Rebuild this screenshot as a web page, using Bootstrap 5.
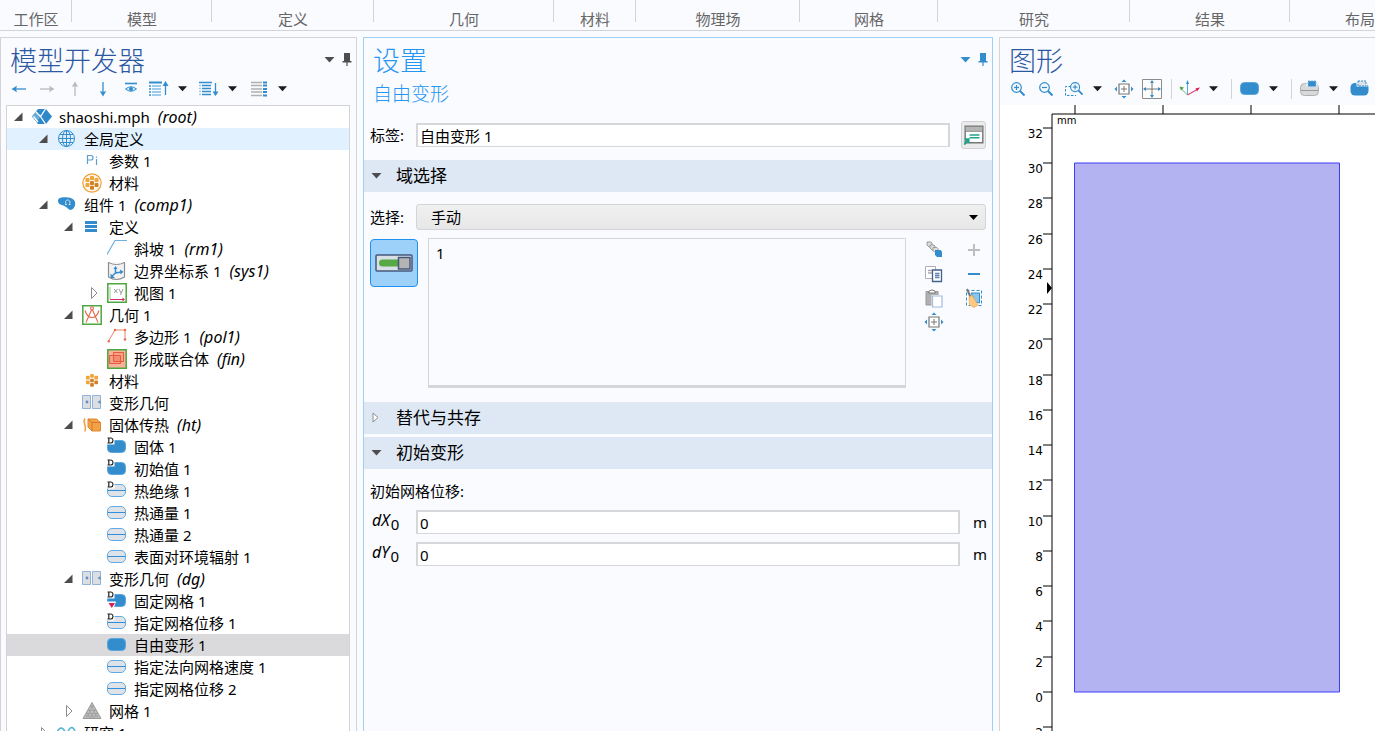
<!DOCTYPE html>
<html lang="zh-CN">
<head>
<meta charset="utf-8">
<meta name="viewport" content="width=device-width, initial-scale=1">
<title>shaoshi.mph</title>
<link href="https://cdn.jsdelivr.net/npm/bootstrap@5.3.0/dist/css/bootstrap.min.css" rel="stylesheet">
<style>
:root { --line:#d3d4d8; --pane:#fafbff; --blue:#338dcd; --bar:#dee8f4; }
body { font-family:"Noto Sans","Noto Sans CJK SC",sans-serif; font-size:15px; line-height:22px; color:#000; background:var(--pane); }
button { font:inherit; color:inherit; }
svg { display:block; flex:none; }

/* ribbon */
.ribbon { display:grid; grid-template-columns:72fr 140fr 162fr 180fr 82fr 164fr 138fr 192fr 160fr 85fr; height:32px; border-bottom:1px solid var(--line); color:#666; }
.ribbon-group { position:relative; padding-top:8px; text-align:center; white-space:nowrap; overflow:hidden; }
.ribbon-group:not(:last-child)::after { content:""; position:absolute; right:0; top:0; height:22px; border-right:1px solid var(--line); }

/* window panes */
.workspace { display:grid; grid-template-columns:minmax(0,357fr) minmax(0,630fr) minmax(0,376fr); gap:6px; padding-top:6px; }
.pane { border:1px solid var(--line); border-bottom:0; background:var(--pane); }
.pane-active { border-color:#9fcff5; }
.pane-head { height:40px; padding:4px 0 0 9px; }
.pane-head h1 { font-family:"Noto Sans CJK SC Light","Noto Sans CJK SC",sans-serif; font-size:27px; font-weight:300; line-height:36px; color:#2c58a2; }
.pane-active h1, .pane-sub { color:#2796f2; }
.pane-sub { font-family:"Noto Sans CJK SC Light","Noto Sans CJK SC",sans-serif; font-size:19px; font-weight:300; line-height:30px; padding-left:9px; margin-bottom:13px; }
.win-btn { border:0; background:none; padding:0; width:18px; height:20px; display:flex; align-items:center; justify-content:center; color:#4d4d4d; }
.pane-active .win-btn { color:var(--blue); }
.tools { height:21px; margin-bottom:6px; padding-left:4px; color:#1a1a1a; }
.tool, .tool-more { border:0; background:none; padding:0; height:20px; display:flex; align-items:center; justify-content:center; flex:none; }
.tool { width:28px; }
.tool-more { width:18px; }
.tool-on { color:var(--blue); }
.tool-off { color:#b9b9bb; }
.rule { width:1px; height:20px; background:var(--line); flex:none; margin:0 4px 0 5px; }
.rule-wide { margin-left:9px; }

/* model tree */
.tree { margin:0 6px 0 5px; border:1px solid var(--line); border-bottom:0; background:#fff; list-style:none; padding:0; }
.tree-row { display:flex; align-items:center; height:22px; padding-left:5px; color:#000; text-decoration:none; white-space:nowrap; }
.tree-row em { margin-left:8px; font-size:16px; }
.fold { width:20px; flex:none; }
.glyph { width:20px; height:20px; margin-right:7px; }
.lv1 { padding-left:30px; } .lv2 { padding-left:55px; } .lv3 { padding-left:80px; }
.row-hot { background:#e1f1ff; }
.row-sel { background:#dadadc; }

/* settings form */
.form-line { display:flex; align-items:center; padding:0 6px; }
.field-name { width:46px; flex:none; }
.field { flex:1; min-width:0; height:24px; padding:0 2px; border:2px solid #d6d7da; border-bottom-width:1px; background:#fff; outline:0; color:#000; line-height:20px; }
.pick { flex:1; min-width:0; height:26px; padding:0 14px; appearance:none; border:1px solid #d3d4d6; border-radius:3px; color:#000; line-height:22px;
  background:url("data:image/svg+xml,%3Csvg xmlns='http://www.w3.org/2000/svg' width='9' height='5'%3E%3Cpath d='M0 0h9L4.500 5z'/%3E%3C/svg%3E") no-repeat right 7px center, linear-gradient(#f0f0f1,#e7e7e8); }
.panel-btn { width:25px; height:28px; margin-left:11px; border:1px solid #d0d1d4; border-radius:3px; background:#ebebec; padding:0; display:flex; align-items:center; justify-content:center; }
.section-bar { width:100%; height:32px; border:0; background:var(--bar); padding:0 7px; display:flex; align-items:center; font-size:17px; text-align:left; }
.section-bar svg { margin-right:14px; color:#4d4d4d; }
.bar-first { margin:11px 0 12px; }
.bar-last { margin:3px 0 11px; }
.pick-area { margin:8px 0 14px; }
.active-btn { width:48px; height:48px; margin-top:1px; border:1px solid #1f90ee; border-radius:4px; background:#9ed1f9; padding:0; display:flex; align-items:center; justify-content:center; }
.entities { flex:1; min-width:0; height:150px; margin-left:10px; padding:3px 7px; border:1px solid #d5d6d8; border-bottom-width:3px; background:var(--pane); resize:none; outline:0; color:#000; display:block; }
.entity-tools { display:grid; grid-template-columns:24px 24px; grid-auto-rows:24px; column-gap:16px; margin-left:16px; }
.entity-tools button { border:0; background:none; padding:0; display:flex; align-items:center; justify-content:center; }
.var { font-style:italic; font-size:16px; padding-left:2px; line-height:20px; height:24px; }
.var sub { font-size:15px; font-style:normal; bottom:-4px; margin-left:1px; line-height:1; }
.unit { width:26px; padding-left:13px; flex:none; }

/* plot */
.plot { flex:1; min-height:0; overflow:hidden; background:#fff; }
.plot text { font-family:"DejaVu Sans",sans-serif; font-size:12px; }
.plot .plot-unit { font-size:10px; }
</style>
</head>
<body class="vh-100 overflow-hidden d-flex flex-column">

<svg width="0" height="0" class="position-absolute" aria-hidden="true">
  <defs>
    <symbol id="open" viewBox="0 0 20 20"><path d="M10.500 5.500v8.500H2z" fill="#4d4d4d"/></symbol>
    <symbol id="shut" viewBox="0 0 20 20"><path d="M4.500 4.500v11l5.500-5.500z" fill="#fff" stroke="#8c8c8c"/></symbol>
    <symbol id="i-root" viewBox="0 0 20 20"><path d="M0 9.500 6 2h8l6 7.500L14 17H6z" fill="#2f89c8"/><path d="M0 9.500 4.500 4 8.500 9.500 4.500 15z" fill="#8fc1e4" opacity=".6"/><path d="M4 5l4.500 4.500L13.500 2M8.500 9.500l5 7.500M1.500 9.500 6 15" fill="none" stroke="#fff" stroke-width="1.300"/></symbol>
    <symbol id="i-globe" viewBox="0 0 20 20"><g fill="none" stroke="#338dcd"><circle cx="9.500" cy="9.500" r="8"/><ellipse cx="9.500" cy="9.500" rx="4" ry="8"/><path d="M9.500 1.500v16M1.500 9.500h16M3 5.500h13M3 13.500h13"/></g></symbol>
    <symbol id="i-pi" viewBox="0 0 20 20"><g fill="none" stroke="#5a9fd4" stroke-width="1.200"><path d="M5.500 13V4.500h3.500q2 0 2 2.200T9 9H5.500M14.500 8v6M14.500 5.500v1.200"/></g></symbol>
    <symbol id="dots" viewBox="0 0 14 14"><g fill="#f0a43a"><rect x="5" width="4" height="4" rx="1"/><rect x=".5" y="2" width="4" height="4" rx="1"/><rect x="9.500" y="2" width="4" height="4" rx="1"/><rect x=".5" y="7" width="4" height="4" rx="1"/></g><g fill="#cf8129"><rect x="5" y="5" width="4" height="4" rx="1"/><rect x="9.500" y="7" width="4" height="4" rx="1"/><rect x="5" y="9.700" width="4" height="4" rx="1"/></g></symbol>
    <symbol id="i-matc" viewBox="0 0 20 20"><circle cx="10" cy="10" r="9.200" fill="#fff6e8" stroke="#f0a13a" stroke-width="1.200"/><use href="#dots" x="3" y="3" width="14" height="14"/></symbol>
    <symbol id="i-mat" viewBox="0 0 20 20"><use href="#dots" x="3.500" y="3" width="13" height="13"/></symbol>
    <symbol id="i-comp" viewBox="0 0 20 20"><path d="M1 6C1 2 6 2 11 2.500c6 .5 8 4 7 8-1 4-4.500 5.500-6.500 3.500C9.500 12 8 11 5 10 2.500 9.200 1 8.500 1 6z" fill="#338dcd"/><path d="M8 9.500h1.500c-2-2.500-.5-4.500 1.300-4.500s3.200 2 1.200 4.500h1.500" fill="none" stroke="#cfe5f5"/></symbol>
    <symbol id="i-def" viewBox="0 0 20 20"><path d="M3 5.500h12M3 9.500h12M3 13.500h12" stroke="#338dcd" stroke-width="3"/></symbol>
    <symbol id="i-ramp" viewBox="0 0 20 20"><path d="M0 15.500 8 1.500h12" fill="none" stroke="#6fb0de" stroke-width="1.200"/></symbol>
    <symbol id="i-sys" viewBox="0 0 20 20"><path d="M1.500 1v15q8 5 16 0V1" fill="#f2f2f2" stroke="#8c8c8c" stroke-width="1.200"/><path d="M1.500 1.500q8 4 16 0" fill="#fff" stroke="#8c8c8c"/><path d="M8.500 12V7M8.500 12l6-1M8.500 12 5 15" stroke="#338dcd" stroke-width="1.500"/><path d="M6.500 8l2-3 2 3zM13 8.500l3.500 2.300-3 2.700zM3.500 12.500V17H8z" fill="#338dcd"/></symbol>
    <symbol id="i-view" viewBox="0 0 20 20"><path d="M.8.800h18.400v18.400H.8z" fill="#fff" stroke="#4ea73f" stroke-width="1.500"/><path d="M3 16V4" stroke="#8fcf85"/><path d="M3 16.500h14" stroke="#d42a6b"/><path d="M15.500 14.500l2.500 2-2.500 2z" fill="#d42a6b"/><path d="M7 6l3.500 4M10.500 6 7 10M12 6l2 4M16 6l-2.500 6" stroke="#999" fill="none"/></symbol>
    <symbol id="i-geom" viewBox="0 0 20 20"><path d="M.8.800h18.400v18.400H.8z" fill="#fff" stroke="#4ea73f" stroke-width="1.500"/><path d="M9.700 4.500 4 17.500M10.300 4.500 16 17.500M3 5.500Q5 12.500 10 12.500T17 5.500" fill="none" stroke="#e66a4e" stroke-width="1.100"/><path d="M8.700 2h2.600v2.600H8.700z" fill="#fff" stroke="#e66a4e"/></symbol>
    <symbol id="i-poly" viewBox="0 0 20 20"><path d="M1.500 14 8 3h10v9" fill="none" stroke="#ec8066"/><g fill="#e66a4e"><circle cx="1.800" cy="14.300" r="1.200"/><circle cx="8" cy="3" r="1.200"/><circle cx="18" cy="3" r="1.200"/><circle cx="18" cy="12.500" r="1.200"/></g></symbol>
    <symbol id="i-union" viewBox="0 0 20 20"><path d="M.8.800h18.400v18.400H.8z" fill="#f8b29c" stroke="#4ea73f" stroke-width="1.500"/><path d="M6.500 3.500h10v9h-10zM2.500 6.500h11v8h-11z" fill="#f5a28a" stroke="#e8593a"/><path d="M7 7h6v5H7z" fill="#f08c70"/></symbol>
    <symbol id="i-dg" viewBox="0 0 20 20"><path d="M.5 2.500h8v13h-8zM10.500 2.500h8v13h-8z" fill="#dcdee2" stroke="#8fb4dc"/><circle cx="5" cy="9" r="1.400" fill="#5e8fc6"/><path d="M18.500 7v4l-3-2z" fill="#5e8fc6"/></symbol>
    <symbol id="i-ht" viewBox="0 0 20 20"><path d="M3 3.500c-3 4 2 5 0 13" fill="none" stroke="#f0a13a" stroke-width="1.600"/><path d="M6 4h8.500l4 3.500V16H10l-4-4z" fill="#f0a445" stroke="#e58636"/><path d="M6 4l4 3.500h8.500M10 7.500V16" fill="none" stroke="#e0712f"/></symbol>
    <symbol id="i-dom" viewBox="0 0 20 20"><rect x=".5" y="3.500" width="18" height="12" rx="4" fill="#338dcd" stroke="#5ba5da"/></symbol>
    <symbol id="i-bnd" viewBox="0 0 20 20"><rect x=".5" y="3.500" width="18" height="12" rx="4.500" fill="#dfe3e7" stroke="#64aae2"/><path d="M1 9.500h17" stroke="#2f8fda"/></symbol>
    <symbol id="dee" viewBox="0 0 8 8"><path d="M0 0h7.500v7.500H0z" fill="#fff"/><path d="M1.800 1v5M.5 1H4q2 .3 2 2.500T4 6H.5" fill="none" stroke="#222" stroke-width="1.200"/></symbol>
    <symbol id="i-domd" viewBox="0 0 20 20"><use href="#i-dom" width="20" height="20"/><use href="#dee" width="8" height="8"/></symbol>
    <symbol id="i-bndd" viewBox="0 0 20 20"><use href="#i-bnd" width="20" height="20"/><use href="#dee" width="8" height="8"/></symbol>
    <symbol id="i-fix" viewBox="0 0 20 20"><use href="#i-domd" width="20" height="20"/><path d="M0 10.500h9l-2 6H0z" fill="#fff"/><path d="M1.500 12h6.500l-3.200 5z" fill="#d81e5b"/></symbol>
    <symbol id="i-mesh" viewBox="0 0 20 20"><path d="M10 1.500 19 17.500H1z" fill="#c4c4c4" stroke="#999"/><path d="M7.500 6h5M6 9.500h8M4 12.500h12M2.500 15h15M9 4l6.500 13M7 8l4.500 9.500M5 11.500 8 17.500M11 4 4.500 17M13 8l-4.500 9.500M15 11.500l-3 6" fill="none" stroke="#999" stroke-width=".7"/></symbol>
    <symbol id="i-study" viewBox="0 0 20 20"><path d="M0 9q4-7 7-2l4 5M11 8q4-7 7 0" fill="none" stroke="#4fb7d0" stroke-width="1.500"/></symbol>

    <symbol id="caret" viewBox="0 0 10 6"><path d="M0 0h10L5 5.500z" fill="currentColor"/></symbol>
    <symbol id="pin" viewBox="0 0 10 14"><path d="M2 0h6v8h1.500v1.500h-9V8H2zM4.400 9h1.200v4H4.400z" fill="currentColor"/></symbol>
    <symbol id="arrow" viewBox="0 0 16 16"><path d="M4 8h11" stroke="currentColor" stroke-width="1.300"/><path d="M.5 8 6 4.700 5 8l1 3.300z" fill="currentColor"/></symbol>
    <symbol id="t-eye" viewBox="0 0 16 16"><path d="M2 2.500h12" stroke="#338dcd" stroke-width="1.600"/><path d="M2.500 8Q8 3.500 13.500 8 8 12.500 2.500 8z" fill="#d6eaf8" stroke="#338dcd"/><circle cx="8" cy="8" r="2" fill="#338dcd"/></symbol>
    <symbol id="t-up" viewBox="0 0 20 16"><path d="M0 1.500h13" stroke="#338dcd" stroke-width="2"/><path d="M0 5h2M0 8h2M0 11h2M0 14h2" stroke="#338dcd" stroke-width="1.500"/><path d="M3 5h9M3 8h9M3 11h9M3 14h9" stroke="#9fcbe9" stroke-width="1.800"/><path d="M16.500 2v12" stroke="#338dcd" stroke-width="1.300"/><path d="M13.500 5l3-5 3 5z" fill="#338dcd"/></symbol>
    <symbol id="t-dn" viewBox="0 0 20 16"><path d="M0 1.500h13M3 4.500h9M3 7.500h9M3 10.500h9M3 13.500h9" stroke="#338dcd" stroke-width="1.600"/><path d="M0 4.500h2M0 7.500h2M0 10.500h2M0 13.500h2" stroke="#9fcbe9" stroke-width="1.500"/><path d="M16.500 2v12" stroke="#338dcd" stroke-width="1.300"/><path d="M13.500 10.500l3 4.500 3-4.500z" fill="#338dcd"/></symbol>
    <symbol id="t-cols" viewBox="0 0 16 16"><path d="M0 1.500h11M0 4.500h11M0 8h11M0 11h11M0 14.500h11" stroke="#b0b0b0" stroke-width="1.300"/><path d="M12 1.500h4M12 4.500h4M12 8h4M12 11h4M12 14.500h4" stroke="#338dcd" stroke-width="1.800"/></symbol>
    <symbol id="lens" viewBox="0 0 16 16"><circle cx="6.500" cy="6.500" r="4.800" fill="#f3f8fc" stroke="#338dcd" stroke-width="1.200"/><path d="M10 10l4.500 4.500" stroke="#338dcd" stroke-width="2"/><path d="M4 6.500h5" stroke="#338dcd" stroke-width="1.200"/></symbol>
    <symbol id="t-in" viewBox="0 0 16 16"><use href="#lens" width="16" height="16"/><path d="M6.500 4v5" stroke="#338dcd" stroke-width="1.200"/></symbol>
    <symbol id="t-box" viewBox="0 0 20 16"><path d="M7 5.500H1.500v9H12" fill="none" stroke="#338dcd" stroke-dasharray="2.500 1.500"/><use href="#t-in" x="5" y="0" width="15" height="15"/></symbol>
    <symbol id="t-ext" viewBox="0 0 20 20"><path d="M5 5h10v10H5z" fill="#fff" stroke="#777" stroke-width="1.200"/><path d="M7 10h6M10 7v6" stroke="#777"/><path d="M7.500 3 10 .5 12.500 3zM7.500 17l2.500 2.500 2.500-2.500zM3 7.500.5 10 3 12.500zM17 7.500l2.500 2.500-2.500 2.500z" fill="#338dcd"/></symbol>
    <symbol id="t-fit" viewBox="0 0 20 20"><path d="M.5.500h19v19H.5z" fill="#fdfdfe" stroke="#8c8c8c"/><path d="M10 2v16M2 10h16" stroke="#777"/><path d="M8 4l2-3 2 3zM8 16l2 3 2-3zM4 8l-3 2 3 2zM16 8l3 2-3 2z" fill="#338dcd"/></symbol>
    <symbol id="t-axes" viewBox="0 0 22 18"><path d="M8.500 15V3" stroke="#5ba5da"/><path d="M8.500 15 2 8.500" stroke="#63bf5a"/><path d="M8.500 15 19 9" stroke="#df4a80" stroke-width="1.200"/><path d="M7 4l1.500-4L10 4z" fill="#338dcd"/><path d="M.5 6.500l4.500 1-3 3z" fill="#4ea73f"/><path d="M21 7.500l-3 4-1.500-3.200z" fill="#d42a5b"/></symbol>
    <symbol id="t-prt" viewBox="0 0 20 20"><rect x=".5" y="4.500" width="18" height="12" rx="4" fill="#d8d9db" stroke="#b0b0b0"/><path d="M1 11.500h17" stroke="#999"/><path d="M6.500 1h11v7h-11z" fill="#fafbff"/><path d="M8 2h8v5.500H8z" fill="#338dcd" stroke="#7ab4e0" stroke-dasharray="2 1"/></symbol>
    <symbol id="t-prb" viewBox="0 0 20 20"><rect x=".5" y="4" width="18" height="12.500" rx="4.500" fill="#338dcd"/><path d="M6.500 1h11v6.500h-11z" fill="#fafbff"/><path d="M8 2h8v5H8z" fill="#dfe2e5" stroke="#338dcd" stroke-dasharray="2 1"/></symbol>

    <symbol id="s-form" viewBox="0 0 20 20"><path d="M2 2h16v15H2z" fill="#fff" stroke="#777" stroke-width="1.300"/><path d="M2.500 2.500h15V6h-15z" fill="#b5b5b5"/><path d="M2 6.500h16" stroke="#777"/><path d="M6 10h9M6 12.500h9" stroke="#20a48b" stroke-width="1.300"/><path d="M1 13h5v5l-1.700-1.700L2 19l-1.500-.5 1.800-3.300z" fill="#20a48b"/></symbol>
    <symbol id="s-switch" viewBox="0 0 38 18"><rect x="1" y="1" width="36" height="16" rx="1" fill="#dadfe5" stroke="#44597c" stroke-width="1.500"/><path d="M23 5.500H7.500a3.500 3.500 0 0 0 0 7H23z" fill="#56a944"/><path d="M23.500 3.500h11.500v11.500H23.500z" fill="#b4b4b4" stroke="#44597c" stroke-width="1.500"/></symbol>
    <symbol id="s-chain" viewBox="0 0 20 20"><g fill="#ddd" stroke="#9b9b9b"><path d="M3 2h4l1 1v4H5L3 5z"/><path d="M6 5h4l1 1v4H8L6 8z"/><path d="M9 7.500h4l1 1v4h-3l-2-2z"/></g><path d="M11 10h5.500l1.500 1.500V17h-5l-2-2z" fill="#338dcd"/></symbol>
    <symbol id="s-copy" viewBox="0 0 20 20"><path d="M1.500 2.500h10v12h-10z" fill="#fff" stroke="#b0b0b0"/><path d="M4 6.500h4M4 9h4" stroke="#aaa" stroke-width="1.500"/><path d="M8.500 6h9v11.500h-9z" fill="#fff" stroke="#44608c" stroke-width="1.300"/><path d="M11 9.500h4.500M11 11.500h4.500M11 13.500h4.500" stroke="#6a84ac" stroke-width="1.300"/></symbol>
    <symbol id="s-paste" viewBox="0 0 20 20"><path d="M2 3.500h12V17H2z" fill="#b0b0b0" stroke="#999"/><path d="M4.500 5q0-3 3.500-3t3.500 3z" fill="#fff" stroke="#777"/><path d="M7.500 7h11v13h-11z" fill="#fafbff"/><path d="M8.500 8h9.500v11H8.500z" fill="#fff" stroke="#9fbbe0" stroke-width="1.200"/></symbol>
    <symbol id="s-broom" viewBox="0 0 20 20"><path d="M2.500 2.500h15v15h-15z" fill="none" stroke="#338dcd" stroke-dasharray="3 2"/><path d="M7 5h8.500v10l-4-1z" fill="#8cc4ea" stroke="#338dcd"/><path d="M3 1l3.500 8" stroke="#777" stroke-width="2"/><path d="M5 9l3.200-1.500L14 17l-4 2.500L5.500 17z" fill="#fdc983" stroke="#f3ac58" stroke-width=".8"/></symbol>
  </defs>
</svg>

<header class="ribbon">
  <div class="ribbon-group">工作区</div><div class="ribbon-group">模型</div><div class="ribbon-group">定义</div><div class="ribbon-group">几何</div><div class="ribbon-group">材料</div><div class="ribbon-group">物理场</div><div class="ribbon-group">网格</div><div class="ribbon-group">研究</div><div class="ribbon-group">结果</div><div class="ribbon-group text-end">布局</div>
</header>

<main class="workspace flex-grow-1 overflow-hidden">
  <section class="pane overflow-hidden">
    <div class="pane-head d-flex justify-content-between">
      <h1 class="mb-0">模型开发器</h1>
      <div class="d-flex pt-2">
        <button class="win-btn" aria-label="菜单"><svg width="11" height="6"><use href="#caret"/></svg></button>
        <button class="win-btn" aria-label="固定"><svg width="10" height="14"><use href="#pin"/></svg></button>
      </div>
    </div>
    <div class="tools d-flex align-items-center">
      <button class="tool tool-on" aria-label="后退"><svg width="16" height="16"><use href="#arrow"/></svg></button>
      <button class="tool tool-off" aria-label="前进"><svg width="16" height="16"><use href="#arrow" transform="rotate(180 8 8)"/></svg></button>
      <button class="tool tool-off" aria-label="上移"><svg width="16" height="16"><use href="#arrow" transform="rotate(90 8 8)"/></svg></button>
      <button class="tool tool-on" aria-label="下移"><svg width="16" height="16"><use href="#arrow" transform="rotate(-90 8 8)"/></svg></button>
      <button class="tool" aria-label="显示"><svg width="16" height="16"><use href="#t-eye"/></svg></button>
      <button class="tool" aria-label="折叠"><svg width="20" height="16"><use href="#t-up"/></svg></button>
      <button class="tool-more me-1" aria-label="更多"><svg width="9" height="6"><use href="#caret"/></svg></button>
      <button class="tool" aria-label="展开"><svg width="20" height="16"><use href="#t-dn"/></svg></button>
      <button class="tool-more me-1" aria-label="更多"><svg width="9" height="6"><use href="#caret"/></svg></button>
      <button class="tool" aria-label="列"><svg width="16" height="16"><use href="#t-cols"/></svg></button>
      <button class="tool-more" aria-label="更多"><svg width="9" height="6"><use href="#caret"/></svg></button>
    </div>
    <ul class="tree">
      <li><a href="#" class="tree-row"><svg class="fold" height="20"><use href="#open"/></svg><svg class="glyph"><use href="#i-root"/></svg>shaoshi.mph<em>(root)</em></a></li>
      <li><a href="#" class="tree-row lv1 row-hot"><svg class="fold" height="20"><use href="#open"/></svg><svg class="glyph"><use href="#i-globe"/></svg>全局定义</a></li>
      <li><a href="#" class="tree-row lv2"><span class="fold"></span><svg class="glyph"><use href="#i-pi"/></svg>参数 1</a></li>
      <li><a href="#" class="tree-row lv2"><span class="fold"></span><svg class="glyph"><use href="#i-matc"/></svg>材料</a></li>
      <li><a href="#" class="tree-row lv1"><svg class="fold" height="20"><use href="#open"/></svg><svg class="glyph"><use href="#i-comp"/></svg>组件 1<em>(comp1)</em></a></li>
      <li><a href="#" class="tree-row lv2"><svg class="fold" height="20"><use href="#open"/></svg><svg class="glyph"><use href="#i-def"/></svg>定义</a></li>
      <li><a href="#" class="tree-row lv3"><span class="fold"></span><svg class="glyph"><use href="#i-ramp"/></svg>斜坡 1<em>(rm1)</em></a></li>
      <li><a href="#" class="tree-row lv3"><span class="fold"></span><svg class="glyph"><use href="#i-sys"/></svg>边界坐标系 1<em>(sys1)</em></a></li>
      <li><a href="#" class="tree-row lv3"><svg class="fold" height="20"><use href="#shut"/></svg><svg class="glyph"><use href="#i-view"/></svg>视图 1</a></li>
      <li><a href="#" class="tree-row lv2"><svg class="fold" height="20"><use href="#open"/></svg><svg class="glyph"><use href="#i-geom"/></svg>几何 1</a></li>
      <li><a href="#" class="tree-row lv3"><span class="fold"></span><svg class="glyph"><use href="#i-poly"/></svg>多边形 1<em>(pol1)</em></a></li>
      <li><a href="#" class="tree-row lv3"><span class="fold"></span><svg class="glyph"><use href="#i-union"/></svg>形成联合体<em>(fin)</em></a></li>
      <li><a href="#" class="tree-row lv2"><span class="fold"></span><svg class="glyph"><use href="#i-mat"/></svg>材料</a></li>
      <li><a href="#" class="tree-row lv2"><span class="fold"></span><svg class="glyph"><use href="#i-dg"/></svg>变形几何</a></li>
      <li><a href="#" class="tree-row lv2"><svg class="fold" height="20"><use href="#open"/></svg><svg class="glyph"><use href="#i-ht"/></svg>固体传热<em>(ht)</em></a></li>
      <li><a href="#" class="tree-row lv3"><span class="fold"></span><svg class="glyph"><use href="#i-domd"/></svg>固体 1</a></li>
      <li><a href="#" class="tree-row lv3"><span class="fold"></span><svg class="glyph"><use href="#i-domd"/></svg>初始值 1</a></li>
      <li><a href="#" class="tree-row lv3"><span class="fold"></span><svg class="glyph"><use href="#i-bndd"/></svg>热绝缘 1</a></li>
      <li><a href="#" class="tree-row lv3"><span class="fold"></span><svg class="glyph"><use href="#i-bnd"/></svg>热通量 1</a></li>
      <li><a href="#" class="tree-row lv3"><span class="fold"></span><svg class="glyph"><use href="#i-bnd"/></svg>热通量 2</a></li>
      <li><a href="#" class="tree-row lv3"><span class="fold"></span><svg class="glyph"><use href="#i-bnd"/></svg>表面对环境辐射 1</a></li>
      <li><a href="#" class="tree-row lv2"><svg class="fold" height="20"><use href="#open"/></svg><svg class="glyph"><use href="#i-dg"/></svg>变形几何<em>(dg)</em></a></li>
      <li><a href="#" class="tree-row lv3"><span class="fold"></span><svg class="glyph"><use href="#i-fix"/></svg>固定网格 1</a></li>
      <li><a href="#" class="tree-row lv3"><span class="fold"></span><svg class="glyph"><use href="#i-bndd"/></svg>指定网格位移 1</a></li>
      <li><a href="#" class="tree-row lv3 row-sel"><span class="fold"></span><svg class="glyph"><use href="#i-dom"/></svg>自由变形 1</a></li>
      <li><a href="#" class="tree-row lv3"><span class="fold"></span><svg class="glyph"><use href="#i-bnd"/></svg>指定法向网格速度 1</a></li>
      <li><a href="#" class="tree-row lv3"><span class="fold"></span><svg class="glyph"><use href="#i-bnd"/></svg>指定网格位移 2</a></li>
      <li><a href="#" class="tree-row lv2"><svg class="fold" height="20"><use href="#shut"/></svg><svg class="glyph"><use href="#i-mesh"/></svg>网格 1</a></li>
      <li><a href="#" class="tree-row lv1"><svg class="fold" height="20"><use href="#shut"/></svg><svg class="glyph"><use href="#i-study"/></svg>研究 1</a></li>
    </ul>
  </section>

  <section class="pane pane-active overflow-hidden">
    <div class="pane-head d-flex justify-content-between">
      <h1 class="mb-0">设置</h1>
      <div class="d-flex pt-2">
        <button class="win-btn" aria-label="菜单"><svg width="11" height="6"><use href="#caret"/></svg></button>
        <button class="win-btn" aria-label="固定"><svg width="10" height="14"><use href="#pin"/></svg></button>
      </div>
    </div>
    <div class="pane-sub">自由变形</div>
    <div class="form-line">
      <label class="field-name" for="lbl">标签:</label>
      <input class="field" id="lbl" type="text" value="自由变形 1">
      <button class="panel-btn" aria-label="转到源"><svg width="22" height="22"><use href="#s-form"/></svg></button>
    </div>
    <button class="section-bar bar-first"><svg width="11" height="6"><use href="#caret"/></svg>域选择</button>
    <div class="form-line">
      <label class="field-name" for="sel">选择:</label>
      <select class="pick" id="sel"><option>手动</option></select>
    </div>
    <div class="form-line align-items-start pick-area">
      <button class="active-btn" aria-label="激活选择"><svg width="38" height="18"><use href="#s-switch"/></svg></button>
      <textarea class="entities" aria-label="域" readonly>1</textarea>
      <div class="entity-tools">
        <button aria-label="创建选择"><svg width="20" height="20"><use href="#s-chain"/></svg></button>
        <button aria-label="添加"><svg width="14" height="14"><path d="M7 1v12M1 7h12" stroke="#bdbdbd" stroke-width="2"/></svg></button>
        <button aria-label="复制"><svg width="20" height="20"><use href="#s-copy"/></svg></button>
        <button aria-label="移除"><svg width="14" height="14"><path d="M1 7h12" stroke="#338dcd" stroke-width="2"/></svg></button>
        <button aria-label="粘贴"><svg width="20" height="20"><use href="#s-paste"/></svg></button>
        <button aria-label="清除"><svg width="20" height="20"><use href="#s-broom"/></svg></button>
        <button aria-label="缩放到选择"><svg width="20" height="20"><use href="#t-ext"/></svg></button>
      </div>
    </div>
    <button class="section-bar"><svg width="11" height="12"><path d="M2 1v9l5-4.500z" fill="#fff" stroke="#8c8c8c"/></svg>替代与共存</button>
    <button class="section-bar bar-last"><svg width="11" height="6"><use href="#caret"/></svg>初始变形</button>
    <div class="form-line mb-2">初始网格位移:</div>
    <div class="form-line mb-2">
      <label class="field-name var" for="dx">dX<sub>0</sub></label>
      <input class="field" id="dx" type="text" value="0"><span class="unit">m</span>
    </div>
    <div class="form-line">
      <label class="field-name var" for="dy">dY<sub>0</sub></label>
      <input class="field" id="dy" type="text" value="0"><span class="unit">m</span>
    </div>
  </section>

  <section class="pane border-end-0 overflow-hidden d-flex flex-column">
    <div class="pane-head"><h1 class="mb-0">图形</h1></div>
    <div class="tools d-flex align-items-center">
      <button class="tool" aria-label="放大"><svg width="16" height="16"><use href="#t-in"/></svg></button>
      <button class="tool" aria-label="缩小"><svg width="16" height="16"><use href="#lens"/></svg></button>
      <button class="tool" aria-label="框选缩放"><svg width="20" height="16"><use href="#t-box"/></svg></button>
      <button class="tool-more me-1" aria-label="更多"><svg width="9" height="6"><use href="#caret"/></svg></button>
      <button class="tool" aria-label="缩放到选择"><svg width="20" height="20"><use href="#t-ext"/></svg></button>
      <button class="tool" aria-label="缩放到窗口"><svg width="20" height="20"><use href="#t-fit"/></svg></button>
      <span class="rule"></span>
      <button class="tool" aria-label="视图方向"><svg width="22" height="18"><use href="#t-axes"/></svg></button>
      <button class="tool-more" aria-label="更多"><svg width="9" height="6"><use href="#caret"/></svg></button>
      <span class="rule rule-wide"></span>
      <button class="tool" aria-label="选择域"><svg width="20" height="20"><use href="#i-dom"/></svg></button>
      <button class="tool-more" aria-label="更多"><svg width="9" height="6"><use href="#caret"/></svg></button>
      <span class="rule rule-wide"></span>
      <button class="tool" aria-label="选择边界"><svg width="20" height="20"><use href="#t-prt"/></svg></button>
      <button class="tool-more me-1" aria-label="更多"><svg width="9" height="6"><use href="#caret"/></svg></button>
      <button class="tool" aria-label="框选"><svg width="20" height="20"><use href="#t-prb"/></svg></button>
    </div>
    <div class="plot">
      <svg width="100%" height="100%" role="img" aria-label="几何图形">
        <path d="M75 58h264.500v529H75z" fill="#b4b3f2"/>
        <path d="M74.500 58h265v529h-265z" fill="none" stroke="#3c3cff"/>
        <path d="M52 800V9h2000M75 0v9M163 0v9M251 0v9M339 0v9" fill="none" stroke="#000"/>
        <path d="M43 23h9M43 58h9M43 93h9M43 129h9M43 164h9M43 199h9M43 234h9M43 270h9M43 305h9M43 340h9M43 375h9M43 411h9M43 446h9M43 481h9M43 516h9M43 552h9M43 587h9M43 622h9" stroke="#000"/>
        <path d="M47 177l5 6-5 6z"/>
        <text class="plot-unit" x="57" y="19">mm</text>
        <g text-anchor="end">
          <text x="43" y="33">32</text><text x="43" y="68">30</text><text x="43" y="103">28</text><text x="43" y="139">26</text><text x="43" y="174">24</text><text x="43" y="209">22</text><text x="43" y="244">20</text><text x="43" y="280">18</text><text x="43" y="315">16</text><text x="43" y="350">14</text><text x="43" y="385">12</text><text x="43" y="421">10</text><text x="43" y="456">8</text><text x="43" y="491">6</text><text x="43" y="526">4</text><text x="43" y="562">2</text><text x="43" y="597">0</text><text x="43" y="632">-2</text>
        </g>
      </svg>
    </div>
  </section>
</main>

<script src="https://cdn.jsdelivr.net/npm/bootstrap@5.3.0/dist/js/bootstrap.bundle.min.js"></script>
</body>
</html>
